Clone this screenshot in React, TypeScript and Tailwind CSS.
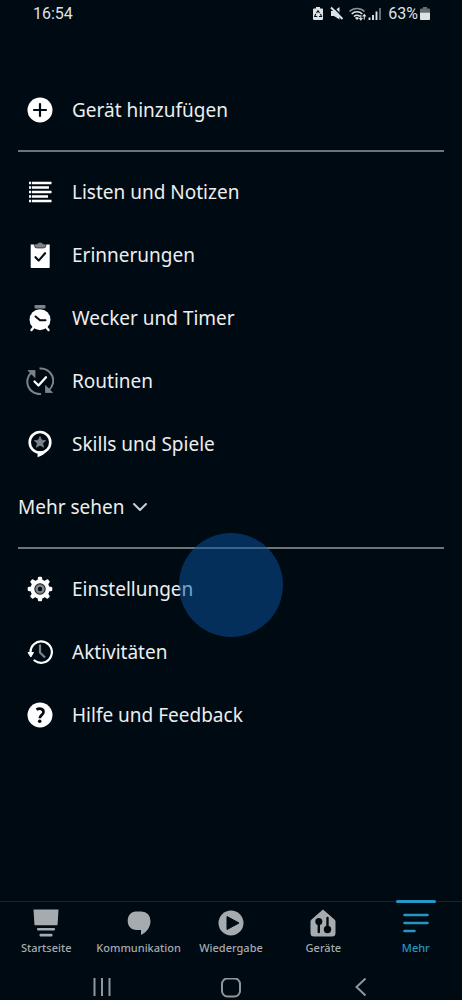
import React from "react";

type IconProps = { children: React.ReactNode };

function Glyph({ children }: IconProps) {
  return (
    <svg viewBox="0 0 28 28" className="h-7 w-7 shrink-0" fill="none" aria-hidden="true">
      {children}
    </svg>
  );
}

const INK = "#000a12";
const GREY = "#7d8389";

const AddIcon = () => (
  <Glyph>
    <circle cx="14" cy="14" r="12.500" fill="#fff" />
    <path d="M14 8v12M8 14h12" stroke={INK} strokeWidth="2.200" strokeLinecap="round" />
  </Glyph>
);

const ListIcon = () => (
  <Glyph>
    <path d="M3 5h2.200M3 9.500h2.200M3 14h2.200M3 18.500h2.200M3 23h2.200" stroke="#fff" strokeWidth="2.300" />
    <path d="M6 5h19.500M6 9.500h17M6 14h19.500M6 18.500h16M6 23h19.500" stroke="#fff" strokeWidth="2.300" />
  </Glyph>
);

const ClipboardIcon = () => (
  <Glyph>
    <path d="M4.700 3.500h19v22.700a.8.8 0 0 1-.8.800H5.500a.8.8 0 0 1-.8-.800z" fill="#fff" />
    <path d="M8.500 3h2.700a3.200 2.500 0 0 1 6 0h2.700v1.500a2.500 2.500 0 0 1-2.500 2.500h-6.400a2.500 2.500 0 0 1-2.500-2.500z" fill={GREY} stroke={INK} strokeWidth=".6" />
    <path d="M9.500 16.200l3.200 3.400 6.400-7.400" stroke={INK} strokeWidth="2.100" strokeLinecap="round" strokeLinejoin="round" />
  </Glyph>
);

const AlarmIcon = () => (
  <Glyph>
    <rect x="8.500" y="1" width="11" height="3.600" rx="1" fill={GREY} />
    <path d="M8 23l-2.500 3M20 23l2.500 3" stroke="#fff" strokeWidth="2.400" strokeLinecap="round" />
    <circle cx="14" cy="15.700" r="10.500" fill="#fff" />
    <path d="M9.500 12.500l4.500 3.700h5.500" stroke={INK} strokeWidth="2" strokeLinecap="round" strokeLinejoin="round" />
  </Glyph>
);

const RoutineIcon = () => (
  <Glyph>
    <path d="M15 27a12.300 12.300 0 0 1-9.500-21.500" stroke={GREY} strokeWidth="2" />
    <path d="M13.500 1.500A12.300 12.300 0 0 1 23 23" stroke={GREY} strokeWidth="2" />
    <path d="M2 3.500h7v7zM26.500 25.500h-7v-7z" fill={GREY} stroke={GREY} strokeWidth=".8" strokeLinejoin="round" />
    <path d="M8.500 14.500l4 4 7.500-8.200" stroke="#fff" strokeWidth="2.300" strokeLinecap="round" strokeLinejoin="round" />
  </Glyph>
);

const SkillsIcon = () => (
  <Glyph>
    <circle cx="14" cy="12.300" r="10.300" stroke="#fff" strokeWidth="2.600" />
    <path d="M11.600 21.500v5.700c4-1.300 8-3.700 10.400-7.500l-5 1.600z" fill="#fff" />
    <path d="M14 6.500l1.700 3.700 4 .4-3 2.700.9 4-3.600-2.100-3.600 2.100.9-4-3-2.700 4-.4z" fill={GREY} stroke={GREY} strokeWidth=".7" strokeLinejoin="round" />
  </Glyph>
);

const GearIcon = () => (
  <Glyph>
    <circle cx="14" cy="14" r="9.600" fill="#fff" />
    {[0, 45, 90, 135].map((angle) => (
      <path
        key={angle}
        d="M11.300 6L12 2.500a1 1 0 0 1 1-.8h2a1 1 0 0 1 1 .8L16.700 6v16l-.7 3.500a1 1 0 0 1-1 .8h-2a1 1 0 0 1-1-.8L11.300 22z"
        fill="#fff"
        transform={`rotate(${angle} 14 14)`}
      />
    ))}
    <circle cx="14" cy="14" r="5.700" fill={INK} />
    <circle cx="14" cy="14" r="3.500" stroke={GREY} strokeWidth="2.600" />
  </Glyph>
);

const HistoryIcon = () => (
  <Glyph>
    <path d="M4.500 15A10.700 10.700 0 1 1 8.500 22.500" stroke="#fff" strokeWidth="2.200" strokeLinecap="round" />
    <path d="M2 14.500h5.500l-2.700 4.500z" fill="#fff" stroke="#fff" strokeWidth="1" strokeLinejoin="round" />
    <path d="M14 6.500v8l5 5" stroke={GREY} strokeWidth="2.200" />
  </Glyph>
);

const HelpIcon = () => (
  <Glyph>
    <circle cx="14" cy="14" r="12.500" fill="#fff" />
    <path d="M10.500 8.700c2.800-1.900 7-1.200 7 2.300 0 2.900-3.700 3.200-3.700 6.300" stroke={INK} strokeWidth="2.700" />
    <circle cx="13.700" cy="20.300" r="1.800" fill={INK} />
  </Glyph>
);

function MenuRow({ icon, label }: { icon: React.ReactNode; label: string }) {
  return (
    <li>
      <a href="#" className="flex h-[63px] items-center gap-[18px] pl-2 text-[19px] leading-6">
        {icon}
        <span>{label}</span>
      </a>
    </li>
  );
}

function Divider() {
  return <hr className="mb-2 mt-[9px] h-0.5 border-0 bg-[#6c7478]" />;
}

function Tab({ icon, label, active = false }: { icon: React.ReactNode; label: string; active?: boolean }) {
  return (
    <a
      href="#"
      aria-current={active ? "page" : undefined}
      className={
        active
          ? "relative flex flex-col items-center gap-0.5 pt-1 text-[#2497c6]"
          : "relative flex flex-col items-center gap-0.5 pt-1 text-[#a6abaf]"
      }
    >
      {active && <span className="absolute -top-0.5 h-[3px] w-10 rounded-sm bg-[#2497c6]" />}
      <svg viewBox="0 0 32 32" className="h-8 w-8" fill="none" aria-hidden="true">
        {icon}
      </svg>
      <span className="text-[11px] font-medium leading-4">{label}</span>
    </a>
  );
}

function StatusBar() {
  return (
    <header className="flex h-7 items-center justify-between pl-[33px] pr-8 font-[Roboto,sans-serif] text-[16px] leading-5 text-[#dfe2e4]">
      <span>16:54</span>
      <div className="flex items-center gap-1">
        <svg viewBox="0 0 72 16" className="h-4 w-[72px]" fill="none" aria-hidden="true">
          <path d="M4 1h4v1.500h2a1 1 0 0 1 1 1V13a1 1 0 0 1-1 1H2a1 1 0 0 1-1-1V3.500a1 1 0 0 1 1-1h2z" fill="#dfe2e4" />
          <path d="M4.500 7L6 4.700 7.500 7M8.500 8l1 2.500H7M5.300 10.500H2.700l1-2.500" stroke={INK} strokeWidth="1.100" />
          <path d="M19 5h3l5.500-4v12.500L22 10h-3z" fill="#dfe2e4" />
          <path d="M20.500 .5l12 12" stroke={INK} strokeWidth="1.600" />
          <path d="M19 1.500l11.500 11.500" stroke="#dfe2e4" strokeWidth="1.900" />
          <path d="M37.500 5.500a11 11 0 0 1 15 0" stroke="#8b9195" strokeWidth="1.600" />
          <path d="M39.700 8a7.500 7.500 0 0 1 10.600 0M42 10.500a4.300 4.300 0 0 1 6 0" stroke="#dfe2e4" strokeWidth="1.600" />
          <path d="M43 12a2.800 2.800 0 0 1 4 0L45 14z" fill="#dfe2e4" />
          <path d="M48.800 9v4.500M47 12l1.800 2L50.500 12M52.300 13.500V9M50.600 10.500l1.700-1.900 1.700 1.900" stroke="#dfe2e4" strokeWidth="1.100" />
          <path d="M57.500 14v-2.500M61 14V9M64.500 14V5.500" stroke="#dfe2e4" strokeWidth="1.900" />
          <path d="M68 14V2" stroke="#6b7176" strokeWidth="1.900" />
        </svg>
        <div className="flex items-center gap-0.5">
          <span>63%</span>
          <svg viewBox="0 0 10 16" className="h-4 w-2.5" aria-hidden="true">
            <path d="M3 1h4v1.500h2a1 1 0 0 1 1 1v3H0v-3a1 1 0 0 1 1-1h2z" fill="#666c71" />
            <path d="M0 6.500h10V13a1 1 0 0 1-1 1H1a1 1 0 0 1-1-1z" fill="#dfe2e4" />
          </svg>
        </div>
      </div>
    </header>
  );
}

export default function App() {
  return (
    <div className="flex min-h-screen flex-col overflow-hidden bg-[#000a12] font-['Noto_Sans',sans-serif] text-[#eceeef]">
      <StatusBar />

      <main className="relative flex-1 px-[18px] pt-[50px]">
        <ul>
          <MenuRow icon={<AddIcon />} label="Gerät hinzufügen" />
        </ul>
        <Divider />
        <ul>
          <MenuRow icon={<ListIcon />} label="Listen und Notizen" />
          <MenuRow icon={<ClipboardIcon />} label="Erinnerungen" />
          <MenuRow icon={<AlarmIcon />} label="Wecker und Timer" />
          <MenuRow icon={<RoutineIcon />} label="Routinen" />
          <MenuRow icon={<SkillsIcon />} label="Skills und Spiele" />
        </ul>
        <button type="button" className="flex h-[63px] items-center gap-2 text-[19px] leading-6">
          <span>Mehr sehen</span>
          <svg viewBox="0 0 14 10" className="h-2.5 w-3.5" fill="none" aria-hidden="true">
            <path d="M1 2l6 6 6-6" stroke="#c9cdcf" strokeWidth="2" strokeLinecap="round" strokeLinejoin="round" />
          </svg>
        </button>
        <Divider />
        <ul>
          <MenuRow icon={<GearIcon />} label="Einstellungen" />
          <MenuRow icon={<HistoryIcon />} label="Aktivitäten" />
          <MenuRow icon={<HelpIcon />} label="Hilfe und Feedback" />
        </ul>
        <span className="pointer-events-none absolute left-1/2 top-[505px] h-[104px] w-[104px] -translate-x-1/2 rounded-full bg-[#0854a2]/50" />
      </main>

      <nav className="grid h-[65px] grid-cols-5 border-t border-[#1b252d]">
        <Tab
          label="Startseite"
          icon={
            <g fill="currentColor">
              <path d="M3.500 3.500h25l-.9 15a.8.8 0 0 1-.8.700H5.200a.8.8 0 0 1-.8-.7z" />
              <rect x="7" y="22" width="18" height="2.600" rx="1" />
              <rect x="9.500" y="27.800" width="13" height="2.600" rx="1" />
            </g>
          }
        />
        <Tab
          label="Kommunikation"
          icon={
            <path
              d="M13 5.500h5.500a9 9 0 0 1 9 9.500c0 6-3.500 11-9.500 14v-5h-4.500c-5.500 0-8.800-4-8.800-9.200 0-5.300 3.300-9.300 8.300-9.300z"
              fill="currentColor"
            />
          }
        />
        <Tab
          label="Wiedergabe"
          icon={
            <>
              <circle cx="16" cy="17" r="12.500" fill="currentColor" />
              <path d="M12 10.500L24 17l-12 6.500z" fill={INK} stroke={INK} strokeLinejoin="round" />
            </>
          }
        />
        <Tab
          label="Geräte"
          icon={
            <>
              <path d="M16 3.500l11.500 10c.7.600 1 1.300 1 2V27a3.500 3.500 0 0 1-3.500 3.500H7A3.500 3.500 0 0 1 3.500 27V15.500c0-.7.300-1.400 1-2z" fill="currentColor" />
              <path d="M11.800 15v11M20.500 12v11" stroke={INK} strokeWidth="2.400" strokeLinecap="round" />
              <circle cx="11.800" cy="15.500" r="3.500" fill={INK} />
              <circle cx="20.500" cy="23.500" r="3.700" fill={INK} />
            </>
          }
        />
        <Tab
          active
          label="Mehr"
          icon={
            <path d="M4.500 9h23M4.500 17h23M4.500 25h10" stroke="currentColor" strokeWidth="2.500" strokeLinecap="round" />
          }
        />
      </nav>

      <footer className="grid h-[34px] grid-cols-3 place-items-center px-[38px] pt-[9px] text-[#90969a]">
        <button type="button" aria-label="Letzte Apps">
          <svg viewBox="0 0 20 20" className="h-5 w-5" fill="none" aria-hidden="true">
            <path d="M2.500 0v18M10 0v18M17.500 0v18" stroke="currentColor" strokeWidth="2" />
          </svg>
        </button>
        <button type="button" aria-label="Startbildschirm">
          <svg viewBox="0 0 20 20" className="h-5 w-5" fill="none" aria-hidden="true">
            <rect x="1" y="0.500" width="18" height="18" rx="5.500" stroke="currentColor" strokeWidth="2" />
          </svg>
        </button>
        <button type="button" aria-label="Zurück">
          <svg viewBox="0 0 20 20" className="h-5 w-5" fill="none" aria-hidden="true">
            <path d="M15.500 .5L6.500 9l9 8.500" stroke="currentColor" strokeWidth="2" />
          </svg>
        </button>
      </footer>
    </div>
  );
}
